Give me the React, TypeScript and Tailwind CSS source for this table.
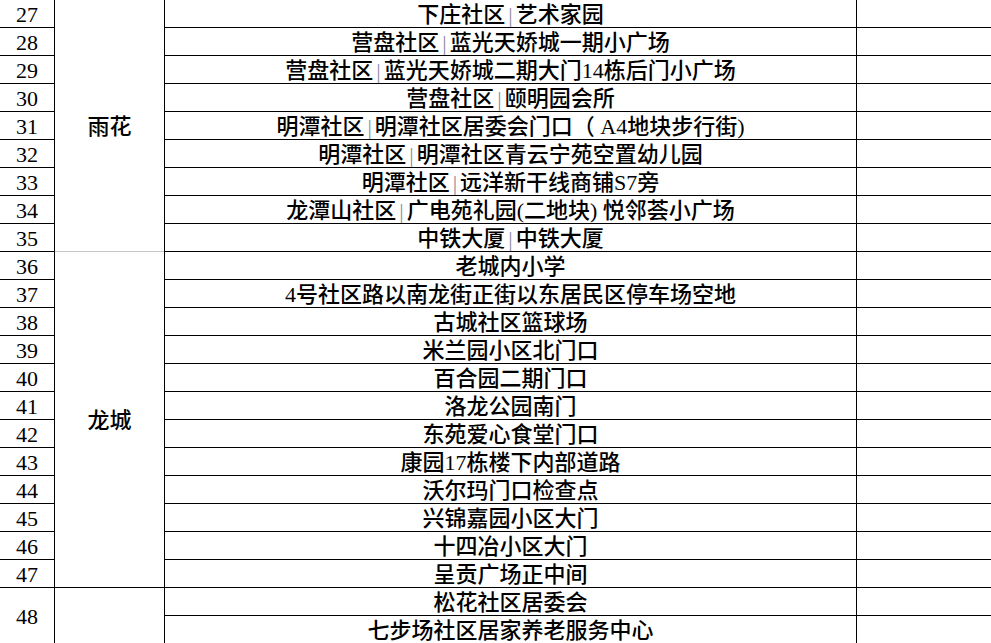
const groups = [
  {
    district: "雨花",
    rows: [
      { no: 27, places: ["下庄社区|艺术家园"] },
      { no: 28, places: ["营盘社区|蓝光天娇城一期小广场"] },
      { no: 29, places: ["营盘社区|蓝光天娇城二期大门14栋后门小广场"] },
      { no: 30, places: ["营盘社区|颐明园会所"] },
      { no: 31, places: ["明潭社区|明潭社区居委会门口（ A4地块步行街)"] },
      { no: 32, places: ["明潭社区|明潭社区青云宁苑空置幼儿园"] },
      { no: 33, places: ["明潭社区|远洋新干线商铺S7旁"] },
      { no: 34, places: ["龙潭山社区|广电苑礼园(二地块) 悦邻荟小广场"] },
      { no: 35, places: ["中铁大厦|中铁大厦"] },
    ],
    last: "gray",
  },
  {
    district: "龙城",
    rows: [
      { no: 36, places: ["老城内小学"] },
      { no: 37, places: ["4号社区路以南龙街正街以东居民区停车场空地"] },
      { no: 38, places: ["古城社区篮球场"] },
      { no: 39, places: ["米兰园小区北门口"] },
      { no: 40, places: ["百合园二期门口"] },
      { no: 41, places: ["洛龙公园南门"] },
      { no: 42, places: ["东苑爱心食堂门口"] },
      { no: 43, places: ["康园17栋楼下内部道路"] },
      { no: 44, places: ["沃尔玛门口检查点"] },
      { no: 45, places: ["兴锦嘉园小区大门"] },
      { no: 46, places: ["十四冶小区大门"] },
      { no: 47, places: ["呈贡广场正中间"] },
    ],
    last: "black",
  },
  {
    district: "",
    rows: [{ no: 48, places: ["松花社区居委会", "七步场社区居家养老服务中心"] }],
    last: "black",
  },
];

const Place = ({ text }: { text: string }) => {
  const parts = text.split("|");
  return (
    <span className="whitespace-nowrap">
      {parts[0]}
      {parts.length > 1 && (
        <>
          <span className="mx-[3px] text-[#8c8c9c]">|</span>
          {parts[1]}
        </>
      )}
    </span>
  );
};

const App = () => {
  const allRows = groups.flatMap((g) => g.rows);
  const allPlaces = allRows.flatMap((r) => r.places);

  return (
    <div
      className="h-[643px] w-[991px] overflow-hidden bg-white text-[22px] font-medium leading-none text-black"
      style={{ fontFamily: '"Liberation Serif", "Noto Sans CJK SC", serif' }}
    >
      <div className="flex">
        {/* number column */}
        <div className="flex w-[55px] shrink-0 flex-col border-r border-black">
          {allRows.map((r) => (
            <div
              key={r.no}
              style={{ height: r.places.length * 28 }}
              className="flex items-center justify-center border-b border-black pt-[3px]"
            >
              {r.no}
            </div>
          ))}
        </div>

        {/* district column */}
        <div className="flex w-[110px] shrink-0 flex-col border-r border-black">
          {groups.map((g, i) => (
            <div
              key={i}
              style={{ height: g.rows.reduce((n, r) => n + r.places.length, 0) * 28 }}
              className={
                g.last === "gray"
                  ? "flex items-center justify-center border-b border-[#c6c6c6] pt-[3px]"
                  : "flex items-center justify-center border-b border-black pt-[3px]"
              }
            >
              {g.district}
            </div>
          ))}
        </div>

        {/* location column */}
        <div className="flex w-[692px] shrink-0 flex-col border-r border-black">
          {allPlaces.map((p, i) => (
            <div key={i} className="flex h-[28px] items-center justify-center border-b border-black pt-[3px]">
              <Place text={p} />
            </div>
          ))}
        </div>

        {/* empty last column */}
        <div className="flex flex-1 flex-col">
          {allPlaces.map((_, i) => (
            <div key={i} className="h-[28px] border-b border-black" />
          ))}
        </div>
      </div>
    </div>
  );
};

export default App;
